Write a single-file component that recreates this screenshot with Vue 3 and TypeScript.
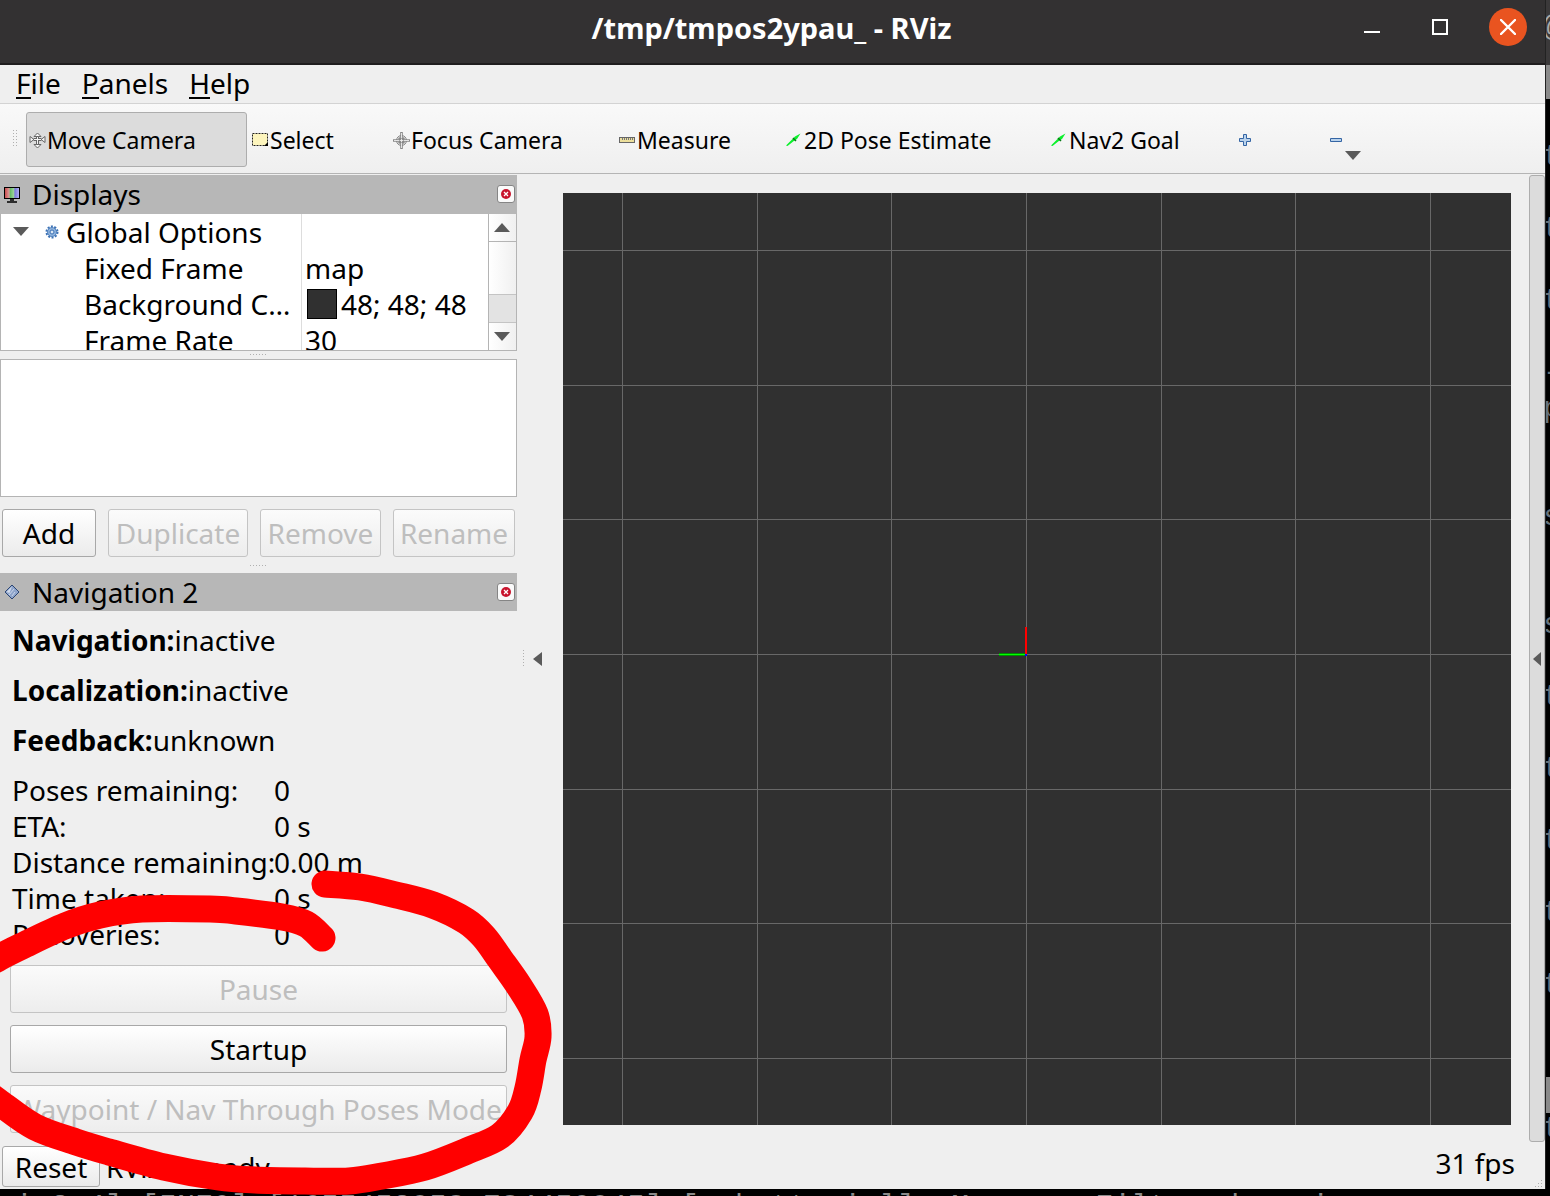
<script setup lang="ts">
interface Tool {
  label: string
  icon: 'move' | 'select' | 'focus' | 'ruler' | 'arrow' | 'plus' | 'minus'
  width: number
  active?: boolean
}

type Point = [number, number]

const menus: string[] = ['File', 'Panels', 'Help']

const tools: Tool[] = [
  { label: 'Move Camera', icon: 'move', width: 221, active: true },
  { label: 'Select', icon: 'select', width: 141 },
  { label: 'Focus Camera', icon: 'focus', width: 226 },
  { label: 'Measure', icon: 'ruler', width: 167 },
  { label: '2D Pose Estimate', icon: 'arrow', width: 265 },
  { label: 'Nav2 Goal', icon: 'arrow', width: 187 },
  { label: '', icon: 'plus', width: 91 },
  { label: '', icon: 'minus', width: 21 },
]

const states = [
  { name: 'Navigation:', value: 'inactive' },
  { name: 'Localization:', value: 'inactive' },
  { name: 'Feedback:', value: 'unknown' },
]

const feedback = [
  { name: 'Poses remaining:', value: '0' },
  { name: 'ETA:', value: '0 s' },
  { name: 'Distance remaining:', value: '0.00 m' },
  { name: 'Time taken:', value: '0 s' },
  { name: 'Recoveries:', value: '0' },
]

const displayButtons = [
  { label: 'Add', enabled: true, width: 94 },
  { label: 'Duplicate', enabled: false, width: 140 },
  { label: 'Remove', enabled: false, width: 121 },
  { label: 'Rename', enabled: false, width: 122 },
]

const columns: number[] = [59, 194, 328, 463, 598, 732, 867]
const rows: number[] = [57, 192, 326, 461, 596, 730, 865]

const edgeLines: string[] = [
  't', '', 't', '', 't', '', '-', 'p', '', '', 's', '', '', 's', '',
  't', '', 't', '', 't', '', 't', '', 't', '', '', '', 't',
]

const outerStroke: Point[] = [
  [325, 884], [360, 887], [396, 895], [433, 905], [466, 921], [484, 937], [500, 959], [519, 986],
  [535, 1014], [538, 1037], [533, 1060], [528, 1088], [520, 1112], [500, 1136], [467, 1151], [425, 1167],
  [382, 1176], [349, 1181], [305, 1181], [255, 1180], [218, 1177], [164, 1167], [109, 1152], [76, 1142],
  [35, 1127], [0, 1103], [-15, 1092],
]

const innerStroke: Point[] = [
  [322, 938], [306, 924], [282, 917], [236, 911], [210, 909], [142, 909], [100, 915], [65, 926],
  [22, 946], [0, 957], [-15, 966],
]

// Catmull-Rom spline through the pen positions
function smooth(points: Point[]): string {
  let d = `M${points[0][0]} ${points[0][1]}`
  for (let i = 0; i < points.length - 1; i++) {
    const a = points[Math.max(i - 1, 0)]
    const b = points[i]
    const c = points[i + 1]
    const e = points[Math.min(i + 2, points.length - 1)]
    d += `C${b[0] + (c[0] - a[0]) / 6} ${b[1] + (c[1] - a[1]) / 6} ${c[0] - (e[0] - b[0]) / 6} ${c[1] - (e[1] - b[1]) / 6} ${c[0]} ${c[1]}`
  }
  return d
}
</script>

<template>
  <div class="desktop">
    <div class="upper">
      <main class="window">
        <header class="titlebar">
          <h1>/tmp/tmpos2ypau_ - RViz</h1>
          <div class="controls">
            <button type="button" aria-label="Minimize">
              <svg width="16" height="16"><path d="M0 13h16" stroke="#fff" stroke-width="2" /></svg>
            </button>
            <button type="button" aria-label="Maximize">
              <svg width="16" height="16"><rect x="1" y="1" width="14" height="14" fill="none" stroke="#fff" stroke-width="2" /></svg>
            </button>
            <button type="button" class="close" aria-label="Close">
              <svg width="16" height="16"><path d="M1 1l14 14M15 1L1 15" stroke="#fff" stroke-width="2.4" stroke-linecap="round" /></svg>
            </button>
          </div>
        </header>

        <nav class="menubar">
          <button v-for="m in menus" :key="m" type="button"><span class="mnemonic">{{ m[0] }}</span>{{ m.slice(1) }}</button>
        </nav>

        <div class="toolbar">
          <span class="grip"></span>
          <button
            v-for="(t, i) in tools"
            :key="i"
            type="button"
            :class="['tool', { active: t.active }]"
            :style="{ width: t.width + 'px' }"
            :aria-label="t.label || t.icon"
          >
            <svg v-if="t.icon === 'move'" width="17" height="17" viewBox="0 0 17 17">
              <g fill="#f4f4f4" stroke="#666">
                <path d="M8.500 1L12 4.500H5zM8.500 16L5 12.500h7zM1 4.500l4 3-4 3zM16 4.500l-4 3 4 3z" />
                <path d="M7.500 4.500h2v8h-2zM5 6.500h7v2H5z" />
              </g>
              <path d="M8 5h1v7H8zM5 7h7v1H5z" fill="#f4f4f4" />
            </svg>
            <svg v-else-if="t.icon === 'select'" width="17" height="17" viewBox="0 0 17 17">
              <rect x=".5" y="1.500" width="15" height="12" fill="#fdf5bd" stroke="#222" stroke-dasharray="2 1" />
              <path d="M16 10v4h-4z" fill="#000" />
            </svg>
            <svg v-else-if="t.icon === 'focus'" width="17" height="17" viewBox="0 0 17 17" fill="none" stroke="#858585">
              <circle cx="8.500" cy="8.500" r="5" fill="#e2e2e2" />
              <circle cx="8.500" cy="8.500" r="2.500" />
              <path d="M8.500 0v17M0 8.500h17" stroke="#888" stroke-width="2.600" />
              <path d="M8.500 1v15M1 8.500h15" stroke="#eee" stroke-width=".9" />
              <path d="M5 6.500h7M5 10.500h7M6.500 5v7M10.500 5v7" stroke-width=".6" />
            </svg>
            <svg v-else-if="t.icon === 'ruler'" width="17" height="17" viewBox="0 0 17 17">
              <rect x=".5" y="5.500" width="15" height="5" fill="#ecdf9c" stroke="#666" />
              <path d="M3.500 6v2M5.500 6v2M7.500 6v2M9.500 6v2M11.500 6v2M13.500 6v2" stroke="#777" />
            </svg>
            <svg v-else-if="t.icon === 'arrow'" width="17" height="17" viewBox="0 0 17 17">
              <path d="M0 13.500L6 7.500 9 4.500l5.500-3L11 7 8.500 8.500 1.500 14z" fill="#0cf02c" />
              <path d="M7 6l3 3" stroke="#067a14" stroke-width="1.500" />
            </svg>
            <svg v-else-if="t.icon === 'plus'" width="14" height="14" viewBox="0 0 14 14">
              <path d="M5.500 1.500h3v4h4v3h-4v4h-3v-4h-4v-3h4z" fill="#b9d2ec" stroke="#3465a4" />
            </svg>
            <svg v-else width="14" height="14" viewBox="0 0 14 14">
              <path d="M1.500 5.500h11v3h-11z" fill="#b9d2ec" stroke="#3465a4" />
            </svg>
            <span>{{ t.label }}</span>
          </button>
          <svg class="more" width="16" height="10"><path d="M0 0h16L8 9z" fill="#5a5a5a" /></svg>
        </div>

        <div class="body">
          <div class="docks">
            <section>
              <header class="dock-title">
                <svg width="17" height="17" viewBox="0 0 17 17">
                  <defs>
                    <linearGradient id="screen">
                      <stop offset="0" stop-color="#c44" /><stop offset=".33" stop-color="#d9a0a0" />
                      <stop offset=".34" stop-color="#5eb85e" /><stop offset=".66" stop-color="#a5d8a5" />
                      <stop offset=".67" stop-color="#7676d8" /><stop offset="1" stop-color="#b7b7f3" />
                    </linearGradient>
                  </defs>
                  <rect x=".5" y="1.500" width="15" height="11" fill="url(#screen)" stroke="#000" />
                  <path d="M6 14h4M3 16h10" stroke="#000" stroke-width="1.500" />
                </svg>
                <h2>Displays</h2>
                <button type="button" class="dock-close" aria-label="Close Displays">
                  <svg width="10" height="10"><circle cx="5" cy="5" r="5" fill="#c8142d" /><path d="M3 3l4 4M7 3L3 7" stroke="#fff" stroke-width="1.300" /></svg>
                </button>
              </header>

              <div class="tree">
                <table>
                  <tbody>
                    <tr>
                      <th class="group" scope="row">
                        <div>
                          <svg width="16" height="10"><path d="M0 0h16L8 9z" fill="#5a5a5a" /></svg>
                          <svg class="gear" width="14" height="14" viewBox="0 0 14 14">
                            <circle cx="7" cy="7" r="5.500" fill="none" stroke="#3c72b5" stroke-width="2" stroke-dasharray="2 1.450" />
                            <circle cx="7" cy="7" r="4.500" fill="#8fb3dd" stroke="#3c72b5" stroke-width=".8" />
                            <circle cx="7" cy="7" r="2" fill="#dce8f5" stroke="#3c72b5" />
                          </svg>
                          <span>Global Options</span>
                        </div>
                      </th>
                      <td></td>
                    </tr>
                    <tr><th scope="row">Fixed Frame</th><td>map</td></tr>
                    <tr><th scope="row">Background Color</th><td><div class="color"><i class="swatch"></i>48; 48; 48</div></td></tr>
                    <tr><th scope="row">Frame Rate</th><td>30</td></tr>
                  </tbody>
                </table>
                <div class="scrollbar">
                  <button type="button" aria-label="Scroll up"><svg width="16" height="9"><path d="M0 9h16L8 0z" fill="#5a5a5a" /></svg></button>
                  <span class="thumb"></span>
                  <span class="trough"></span>
                  <button type="button" aria-label="Scroll down"><svg width="16" height="9"><path d="M0 0h16L8 9z" fill="#5a5a5a" /></svg></button>
                </div>
              </div>
              <span class="split-dots"></span>
              <div class="description"></div>
              <div class="actions">
                <button
                  v-for="b in displayButtons"
                  :key="b.label"
                  type="button"
                  class="push"
                  :disabled="!b.enabled"
                  :style="{ width: b.width + 'px' }"
                >{{ b.label }}</button>
              </div>
            </section>
            <span class="split-dots lower"></span>

            <section>
              <header class="dock-title">
                <svg width="17" height="17" viewBox="0 0 17 17">
                  <path d="M8 1l7 7-7 7-7-7z" fill="#8fa5cb" stroke="#2c4674" />
                  <path d="M8 2.500L2.500 8l3 1z" fill="#d3dcec" />
                  <path d="M5 11l5-6M8 12l3-4" stroke="#dbe3f1" stroke-width=".8" />
                </svg>
                <h2>Navigation 2</h2>
                <button type="button" class="dock-close" aria-label="Close Navigation 2">
                  <svg width="10" height="10"><circle cx="5" cy="5" r="5" fill="#c8142d" /><path d="M3 3l4 4M7 3L3 7" stroke="#fff" stroke-width="1.300" /></svg>
                </button>
              </header>
              <div class="nav-panel">
                <p v-for="s in states" :key="s.name" class="state"><b>{{ s.name }}</b>{{ s.value }}</p>
                <dl>
                  <template v-for="f in feedback" :key="f.name">
                    <dt>{{ f.name }}</dt>
                    <dd>{{ f.value }}</dd>
                  </template>
                </dl>
                <div class="commands">
                  <button type="button" class="push" disabled>Pause</button>
                  <button type="button" class="push">Startup</button>
                  <button type="button" class="push" disabled>Waypoint / Nav Through Poses Mode</button>
                </div>
              </div>
            </section>
          </div>

          <button type="button" class="collapse" aria-label="Collapse left panels">
            <span class="side-dots"></span>
            <svg width="9" height="14"><path d="M9 0v14L0 7z" fill="#5a5a5a" /></svg>
          </button>

          <div class="viewport">
            <svg viewBox="0 0 948 932" preserveAspectRatio="xMidYMid slice" shape-rendering="crispEdges">
              <path v-for="x in columns" :key="'c' + x" :d="`M${x + 0.5} 0V932`" stroke="#686868" />
              <path v-for="y in rows" :key="'r' + y" :d="`M0 ${y + 0.5}H948`" stroke="#686868" />
              <path d="M436 460h26v3h-26z" fill="#008c00" />
              <path d="M436 461h26v1h-26z" fill="#0f0" />
              <path d="M462 434h2v27h-2z" fill="#f00" />
              <path d="M462 461h2v2h-2z" fill="#00f" />
            </svg>
          </div>

          <button type="button" class="edge-handle" aria-label="Expand right panels">
            <svg width="8" height="14"><path d="M8 0v14L0 7z" fill="#5a5a5a" /></svg>
          </button>
        </div>

        <footer class="status">
          <button type="button" class="push reset">Reset</button>
          <span class="message">RViz is ready.</span>
          <span class="fps">31 fps</span>
          <span class="size-grip"></span>
        </footer>
      </main>

      <aside class="terminal-edge">
        <div class="edge-title">@</div>
        <div class="edge-tab"></div>
        <div class="edge-text">
          <span v-for="(l, i) in edgeLines" :key="i">{{ l }}</span>
          <i class="edge-thumb"></i>
        </div>
      </aside>
    </div>

    <div class="terminal-line">viz2-4] [INFO] [1655453958.784450945] [robottorial]: Message Filter dropping</div>

    <svg class="annotation" width="560" height="1196" fill="none" stroke="#f00" stroke-width="27" stroke-linecap="round" stroke-linejoin="round">
      <path :d="smooth(outerStroke)" />
      <path :d="smooth(innerStroke)" />
    </svg>
  </div>
</template>

<style>
body {
  margin: 0;
  background: #000;
}
</style>

<style scoped>
* {
  box-sizing: border-box;
}

.desktop {
  position: relative;
  display: flex;
  flex-direction: column;
  min-height: 100vh;
  overflow: hidden;
  background: #000;
  color: #000;
  font: 28px/36px "Noto Sans", sans-serif;
}

button {
  margin: 0;
  padding: 0;
  border: 0;
  background: none;
  color: inherit;
  font: inherit;
}

svg {
  display: block;
  flex: none;
}

h1,
h2,
p,
dl,
dd {
  margin: 0;
}

.upper {
  display: flex;
  flex: 1;
}

.window {
  display: flex;
  flex: 1;
  flex-direction: column;
  min-width: 0;
  background: #efefef;
}

.titlebar {
  display: grid;
  grid-template-columns: 190px 1fr 192px;
  height: 65px;
  padding-bottom: 8px;
  align-items: center;
  border-bottom: 2px solid #1f1d1e;
  background: #333132;
  color: #fff;
}

.titlebar h1 {
  grid-column: 2;
  font-size: 29px;
  font-weight: 700;
  text-align: center;
}

.controls {
  display: flex;
  align-items: center;
  justify-content: space-between;
  padding: 0 18px 2px 0;
}

.controls button {
  display: grid;
  width: 38px;
  height: 38px;
  place-items: center;
}

.controls .close {
  border-radius: 50%;
  background: #e95420;
}

.menubar {
  display: flex;
  gap: 21px;
  height: 39px;
  padding: 0 16px 2px;
  border-bottom: 1px solid #d3d3d3;
}

.mnemonic {
  display: inline-block;
  height: 34px;
  border-bottom: 2px solid #000;
}

.toolbar {
  display: flex;
  height: 70px;
  align-items: center;
  padding-top: 1px;
  border-bottom: 1px solid #b4b4b4;
  background: linear-gradient(#f9f9f9, #efefef);
  font-size: 23px;
}

.grip,
.split-dots,
.side-dots,
.size-grip {
  background: conic-gradient(at 1px 1px, transparent 270deg, #b0b0b0 0) 0 0 / 3px 3px;
}

.grip {
  width: 5px;
  height: 18px;
  margin: 0 8px 0 13px;
}

.tool {
  display: flex;
  height: 55px;
  flex: none;
  align-items: center;
  padding: 2px 0 0 4px;
  border: 1px solid transparent;
  border-radius: 3px;
  gap: 1px;
  white-space: nowrap;
}

.tool.active {
  padding-left: 2px;
  border-color: #adadad;
  background: #dcdcdc;
}

.more {
  margin-top: 34px;
}

.body {
  display: flex;
  flex: 1;
  padding-top: 1px;
}

.docks {
  width: 517px;
  flex: none;
}

.dock-title {
  display: flex;
  height: 38px;
  align-items: center;
  padding: 0 2px 0 4px;
  background: #b7b7b7;
}

.dock-title h2 {
  flex: 1;
  margin-left: 11px;
  font-size: 28px;
  font-weight: 400;
}

.dock-close {
  display: grid;
  width: 18px;
  height: 18px;
  place-items: center;
  border: 1px solid #858585;
  border-radius: 3px;
  background: #fafafa;
}

.tree {
  display: flex;
  height: 138px;
  overflow: hidden;
  border: 1px solid #b4b4b4;
  border-top-color: #b7b7b7;
  background: #fff;
}

.tree table {
  flex: 1;
  width: 0;
  height: 144px;
  border-spacing: 0;
  table-layout: fixed;
}

.tree th,
.tree td {
  height: 36px;
  overflow: hidden;
  padding: 0 0 0 3px;
  font-weight: 400;
  text-align: left;
  text-overflow: ellipsis;
  white-space: nowrap;
}

.tree th {
  width: 301px;
  padding: 0 4px 0 83px;
  border-right: 1px solid #ddd;
}

.tree th.group {
  padding-left: 12px;
}

.group div,
.color {
  display: flex;
  height: 36px;
  align-items: center;
}

.gear {
  margin: 0 7px 0 16px;
}

.swatch {
  width: 30px;
  height: 30px;
  margin: 0 4px 0 2px;
  border: 1px solid #000;
  background: #303030;
}

.scrollbar {
  display: flex;
  width: 28px;
  flex-direction: column;
  border-left: 1px solid #b4b4b4;
  background: linear-gradient(90deg, #fff, #f0f0f0);
}

.scrollbar button {
  display: grid;
  height: 27px;
  place-items: center;
  padding-right: 2px;
}

.thumb {
  flex: 1;
  border-top: 1px solid #b4b4b4;
}

.trough {
  height: 29px;
  border: solid #c4c4c4;
  border-width: 1px 0;
  background: #e3e3e3;
}

.split-dots {
  display: block;
  width: 17px;
  height: 2px;
  margin: 3px auto;
}

.split-dots.lower {
  margin: 8px auto 6px;
}

.description {
  height: 138px;
  border: 1px solid #b4b4b4;
  background: #fff;
}

.actions {
  display: flex;
  justify-content: space-between;
  padding: 12px 2px 0;
}

.push {
  height: 48px;
  border: 1px solid #a8a8a8;
  border-radius: 3px;
  background: linear-gradient(#fff, #ebebeb);
  white-space: nowrap;
}

.push:disabled {
  border-color: #c4c4c4;
  background: linear-gradient(#fbfbfb, #ededed);
  color: #bebebe;
}

.nav-panel {
  padding: 11px 10px 9px;
}

.state {
  margin: 0 2px 14px;
}

dl {
  display: grid;
  grid-template-columns: 262px 1fr;
  margin: 0 2px;
  white-space: nowrap;
}

.commands {
  display: grid;
  gap: 12px;
  margin-top: 13px;
}

.collapse {
  display: flex;
  width: 46px;
  align-items: center;
  padding-left: 6px;
  gap: 8px;
}

.side-dots {
  width: 2px;
  height: 17px;
}

.viewport {
  position: relative;
  min-width: 0;
  flex: 1;
  margin: 18px 18px 17px 0;
  background: #303030;
}

.viewport svg {
  position: absolute;
  inset: 0;
  width: 100%;
  height: 100%;
}

.edge-handle {
  display: grid;
  width: 16px;
  place-items: center;
  border: 1px solid #adadad;
  border-radius: 3px;
  background: #dcdcdc;
}

.status {
  display: flex;
  height: 47px;
  align-items: center;
  padding: 3px 2px 1px;
}

.push.reset {
  width: 98px;
  height: 41px;
}

.message {
  flex: 1;
  margin-left: 6px;
}

.fps {
  margin-right: 17px;
  padding-bottom: 7px;
}

.size-grip {
  width: 11px;
  height: 11px;
  align-self: flex-end;
  clip-path: polygon(100% 0, 100% 100%, 0 100%);
}

.terminal-edge {
  display: flex;
  width: 5px;
  flex-direction: column;
  overflow: hidden;
  border-left: 1px solid #222;
  color: #66727c;
  font: 30px/36px "Liberation Mono", monospace;
  text-indent: -3px;
}

.edge-title {
  height: 65px;
  padding-top: 10px;
  background: #3b393a;
  color: #aaa;
}

.edge-tab {
  height: 34px;
  background: #8a8a8a;
}

.edge-text {
  position: relative;
  padding-top: 40px;
}

.edge-text span {
  display: block;
  height: 36px;
}

.edge-thumb {
  position: absolute;
  top: 978px;
  left: 0;
  width: 4px;
  height: 36px;
  background: #8a8a8a;
}

.terminal-line {
  height: 7px;
  overflow: hidden;
  color: #8a8a8a;
  font: 30px/36px "Liberation Mono", monospace;
  text-indent: -3px;
  white-space: pre;
}

.annotation {
  position: absolute;
  top: 0;
  left: 0;
  pointer-events: none;
}
</style>
